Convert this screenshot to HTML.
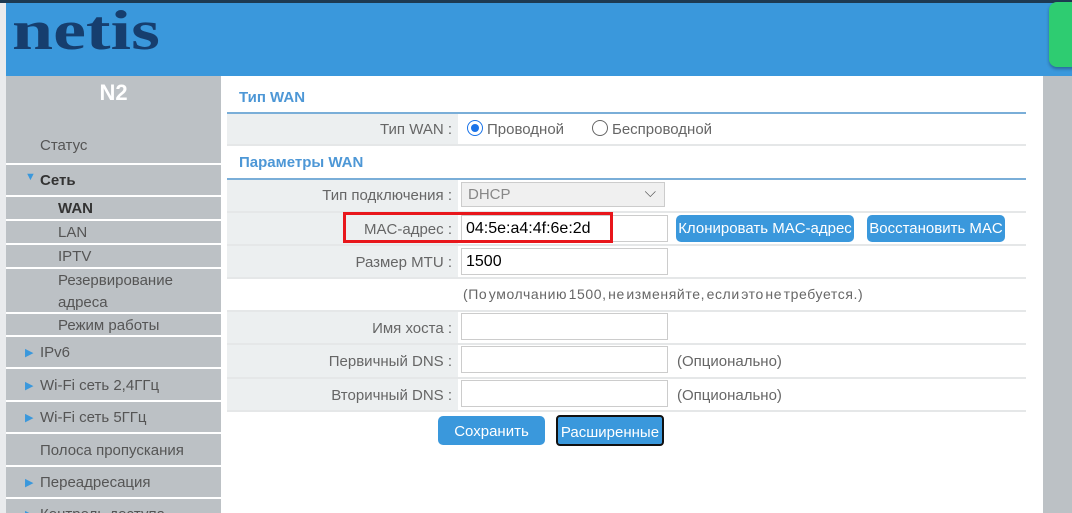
<!DOCTYPE html>
<html><head><meta charset="utf-8"><style>
*{margin:0;padding:0;box-sizing:border-box}
html,body{width:1072px;height:513px;overflow:hidden}
body{background:#fff;font-family:"Liberation Sans",sans-serif;position:relative}
.a{position:absolute}
.top{left:0;top:0;width:1072px;height:3px;background:#1d3a52}
.hdr{left:6px;top:3px;width:1066px;height:73px;background:#3a98dc}
.logo{left:12px;top:-1px;font-family:"Liberation Serif",serif;font-weight:bold;font-size:56px;color:#163e6e;transform:scaleX(1.32);transform-origin:left top}
.green{left:1049px;top:2px;width:40px;height:65px;background:#2ecc71;border-radius:8px;box-shadow:0 2px 3px rgba(0,0,0,.3)}
.lstrip{left:0;top:3px;width:6px;height:510px;background:#e9ebed}
.side{left:6px;top:76px;width:215px;height:437px;background:#bcc1c5}
.rcol{left:1043px;top:76px;width:29px;height:437px;background:#bcc1c5}
.n2{left:6px;top:80px;width:215px;text-align:center;color:#fff;font-weight:bold;font-size:22px}
.si{left:6px;width:215px;font-size:15px;color:#555;border-top:2px solid #fff}
.tri{color:#3a98dc;font-size:11px;position:absolute;left:19px}
.row{left:227px;width:799px;border-bottom:2px solid #e5e7e8}
.lab{left:227px;width:231px;background:#eceff0;text-align:right;padding-right:6px;font-size:15px;color:#666}
.sec{left:239px;font-size:15px;font-weight:bold;color:#4d97d6}
.bl{left:227px;width:799px;height:2px;background:#7aaed8}
.inp{left:461px;width:207px;height:27px;border:1px solid #ccc;background:#fff;font-size:16px;color:#000;padding:4px 4px}
.t{font-size:15px;color:#666}
.btn{background:#3a98dc;color:#fff;font-size:15px;border-radius:5px;text-align:center}
</style></head><body>
<div class="a top"></div>
<div class="a lstrip"></div>
<div class="a hdr"></div>
<div class="a logo">netis</div>
<div class="a green"></div>
<div class="a side"></div>
<div class="a rcol"></div>
<div class="a n2">N2</div>
<div class="a si" style="top:137px;border-top:none;padding-left:34px">Статус</div>
<div class="a si" style="top:163px;height:33px;padding:7px 0 0 34px;font-weight:bold;color:#333"><span class="tri" style="top:6px">▼</span>Сеть</div>
<div class="a si" style="top:195px;height:24px;padding:3px 0 0 52px;font-weight:bold;color:#333">WAN</div>
<div class="a si" style="top:219px;height:24px;padding:3px 0 0 52px">LAN</div>
<div class="a si" style="top:243px;height:24px;padding:3px 0 0 52px">IPTV</div>
<div class="a si" style="top:267px;height:45px;padding:1px 0 0 52px;line-height:22px">Резервирование<br>адреса</div>
<div class="a si" style="top:312px;height:24px;padding:3px 0 0 52px">Режим работы</div>
<div class="a si" style="top:335px;height:33px;padding:7px 0 0 34px"><span class="tri" style="top:9px">▶</span>IPv6</div>
<div class="a si" style="top:367px;height:34px;padding:8px 0 0 34px"><span class="tri" style="top:10px">▶</span>Wi-Fi сеть 2,4ГГц</div>
<div class="a si" style="top:400px;height:33px;padding:7px 0 0 34px"><span class="tri" style="top:9px">▶</span>Wi-Fi сеть 5ГГц</div>
<div class="a si" style="top:432px;height:34px;padding:8px 0 0 34px">Полоса пропускания</div>
<div class="a si" style="top:465px;height:33px;padding:7px 0 0 34px"><span class="tri" style="top:9px">▶</span>Переадресация</div>
<div class="a si" style="top:497px;height:16px;padding:7px 0 0 34px;overflow:hidden"><span class="tri" style="top:9px">▶</span>Контроль доступа</div>

<div class="a sec" style="top:89px">Тип WAN</div>
<div class="a bl" style="top:112px"></div>
<div class="a row" style="top:114px;height:32px"></div>
<div class="a lab" style="top:114px;height:30px;padding-top:7px">Тип WAN :</div>
<div class="a" style="left:467px;top:120px;width:16px;height:16px;border:1.5px solid #1a73e8;border-radius:50%"><div style="margin:2.5px;width:8px;height:8px;background:#1a73e8;border-radius:50%"></div></div>
<div class="a t" style="left:487px;top:121px">Проводной</div>
<div class="a" style="left:592px;top:120px;width:16px;height:16px;border:1.5px solid #666;border-radius:50%"></div>
<div class="a t" style="left:612px;top:121px">Беспроводной</div>
<div class="a sec" style="top:154px">Параметры WAN</div>
<div class="a bl" style="top:178px"></div>

<div class="a row" style="top:180px;height:33px"></div>
<div class="a lab" style="top:180px;height:31px;padding-top:7px">Тип подключения :</div>
<div class="a" style="left:461px;top:182px;width:204px;height:25px;border:1px solid #ccc;background:#f0f0f0;color:#888;font-size:15px;padding:3px 6px">DHCP<span style="position:absolute;right:8px;top:1px;color:#555">⌵</span></div>

<div class="a row" style="top:213px;height:33px"></div>
<div class="a lab" style="top:213px;height:31px;padding-top:8px">MAC-адрес :</div>
<div class="a inp" style="top:215px">04:5e:a4:4f:6e:2d</div>
<div class="a" style="left:343px;top:212px;width:270px;height:31px;border:3px solid #e8161b"></div>
<div class="a btn" style="left:676px;top:215px;width:178px;height:27px;padding-top:5px">Клонировать MAC-адрес</div>
<div class="a btn" style="left:867px;top:215px;width:138px;height:27px;padding-top:5px">Восстановить MAC</div>

<div class="a row" style="top:246px;height:33px"></div>
<div class="a lab" style="top:246px;height:31px;padding-top:8px">Размер MTU :</div>
<div class="a inp" style="top:248px">1500</div>

<div class="a row" style="top:279px;height:33px"></div>
<div class="a" style="left:463px;top:286px;font-size:14px;color:#666;letter-spacing:0.6px;word-spacing:-3px;white-space:nowrap">(По умолчанию 1500, не изменяйте, если это не требуется.)</div>

<div class="a row" style="top:312px;height:33px"></div>
<div class="a lab" style="top:312px;height:31px;padding-top:8px">Имя хоста :</div>
<div class="a inp" style="top:313px"></div>
<div class="a row" style="top:345px;height:34px"></div>
<div class="a lab" style="top:345px;height:32px;padding-top:8px">Первичный DNS :</div>
<div class="a inp" style="top:346px"></div>
<div class="a t" style="left:677px;top:353px">(Опционально)</div>
<div class="a row" style="top:379px;height:33px"></div>
<div class="a lab" style="top:379px;height:31px;padding-top:8px">Вторичный DNS :</div>
<div class="a inp" style="top:380px"></div>
<div class="a t" style="left:677px;top:387px">(Опционально)</div>

<div class="a btn" style="left:438px;top:416px;width:107px;height:29px;padding-top:7px">Сохранить</div>
<div class="a btn" style="left:556px;top:415px;width:108px;height:31px;padding-top:7px;border:2px solid #111;border-radius:4px">Расширенные</div>
</body></html>
